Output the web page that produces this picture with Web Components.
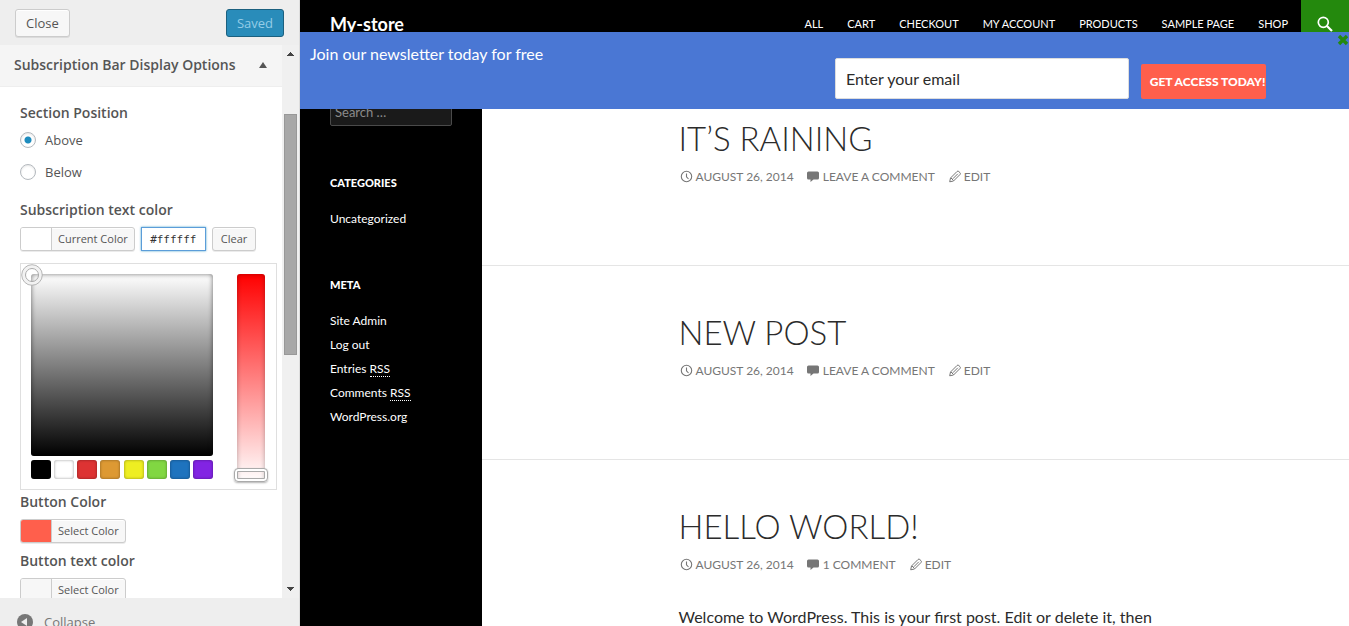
<!DOCTYPE html>
<html lang="en">
<head>
<meta charset="utf-8">
<title>Customize: My-store</title>
<style>
  body { margin: 0; font-family: "Open Sans", sans-serif; }
  side-widget a { color: #fff; text-decoration: none; }
  side-widget abbr { text-decoration: none; border-bottom: 1px dotted #fff; }
</style>
</head>
<body>
<customizer-app>
  <customizer-panel slot="panel">
    <panel-section heading="Subscription Bar Display Options">
      <position-control></position-control>
      <color-control heading="Subscription text color" color="#ffffff" open></color-control>
      <color-control heading="Button Color" color="#ff5f4c"></color-control>
      <color-control heading="Button text color" color="#f7f7f7"></color-control>
    </panel-section>
  </customizer-panel>
  <store-preview slot="preview">
    <store-header slot="header"></store-header>
    <newsletter-bar slot="bar"></newsletter-bar>
    <store-sidebar slot="sidebar">
      <side-widget heading="Categories">
        <li><a href="#uncategorized">Uncategorized</a></li>
      </side-widget>
      <side-widget heading="Meta">
        <li><a href="#admin">Site Admin</a></li>
        <li><a href="#logout">Log out</a></li>
        <li><a href="#entries">Entries <abbr title="Really Simple Syndication">RSS</abbr></a></li>
        <li><a href="#comments">Comments <abbr title="Really Simple Syndication">RSS</abbr></a></li>
        <li><a href="#wordpress">WordPress.org</a></li>
      </side-widget>
    </store-sidebar>
    <blog-post heading="It’s raining" comments="Leave a comment"></blog-post>
    <blog-post heading="New post" comments="Leave a comment"></blog-post>
    <blog-post heading="Hello world!" comments="1 Comment">Welcome to WordPress. This is your first post. Edit or delete it, then</blog-post>
  </store-preview>
</customizer-app>

<script>
const define = (name, render) => customElements.define(name, class extends HTMLElement {
  constructor() {
    super();
    this.attachShadow({ mode: "open" });
  }
  connectedCallback() {
    const t = document.createElement("template");
    t.innerHTML = render(this);
    this.shadowRoot.replaceChildren(t.content.cloneNode(true));
  }
});

/* Two-column shell: settings panel and live preview */
define("customizer-app", () => `
<style>
  :host { display: grid; grid-template-columns: 300px minmax(0, 1fr); height: 100vh; overflow: hidden; }
</style>
<slot name="panel"></slot>
<slot name="preview"></slot>`);

define("customizer-panel", () => `
<style>
  :host { display: flex; flex-direction: column; box-sizing: border-box; min-height: 0; height: 100vh;
          background: #eee; border-right: 1px solid #ddd; font-size: 13px; color: #555; }
  header { display: flex; justify-content: space-between; align-items: center; height: 45px; flex: none; padding: 0 15px; box-sizing: border-box; }
  button { font: inherit; line-height: 26px; padding: 0 10px; border: 1px solid #ccc; border-radius: 3px; background: #f7f7f7;
           color: #555; box-shadow: inset 0 1px 0 #fff, 0 1px 0 rgba(0,0,0,.08); }
  .saved { background: #298cba; border-color: #1b607f; color: #94cde7; box-shadow: none; }
  main { display: flex; flex: 1; min-height: 0; }
  .content { flex: 1; min-width: 0; overflow: hidden; background: #fff; }
  .bar { width: 17px; display: flex; flex-direction: column; background: #f0f0f0; }
  .bar svg { display: block; flex: none; }
  .rail { flex: 1; display: grid; grid-template-rows: 51fr 241fr 225fr; }
  .thumb { grid-row: 2; width: 13px; box-sizing: border-box; margin-left: 2px; background: #a8a8a8; border: 1px solid #989898; }
  footer { flex: none; height: 28px; overflow: hidden; }
  .collapse { display: flex; align-items: center; gap: 11px; height: 48px; padding: 0 17px; border: 0; background: none; box-shadow: none; color: #777; line-height: 24px; }
</style>
<header><button>Close</button><button class="saved">Saved</button></header>
<main>
  <div class="content"><slot></slot></div>
  <div class="bar" aria-hidden="true">
    <svg width="17" height="18"><path d="M5 11h7v-1h-1v-1h-1v-1H9V7H8v1H7v1H6v1H5z" fill="#444"/></svg>
    <div class="rail"><div class="thumb"></div></div>
    <svg width="17" height="18"><path d="M5 7h7v1h-1v1h-1v1H9v1H8v-1H7V9H6V8H5z" fill="#444"/></svg>
  </div>
</main>
<footer>
  <button class="collapse">
    <svg width="16" height="16" viewBox="0 0 16 16"><circle cx="8" cy="8" r="8" fill="#777"/><path d="M10 4v8L4 8z" fill="#eee"/></svg>
    Collapse
  </button>
</footer>`);

define("panel-section", el => `
<style>
  :host { display: block; }
  h3 { display: flex; align-items: center; justify-content: space-between; margin: 0; padding: 0 15px 2px 14px; height: 42px; box-sizing: border-box;
       background: #f5f5f5; border-bottom: 1px solid #eee; font-size: 14px; font-weight: 600; color: #555; }
  .body { padding: 14px 5px 14px 20px; }
</style>
<h3>${el.getAttribute("heading")}<svg width="8" height="6"><path d="M4 0l4 6H0z" fill="#555"/></svg></h3>
<div class="body"><slot></slot></div>`);

define("position-control", () => `
<style>
  :host { display: block; margin-bottom: 16px; }
  fieldset { margin: 0; padding: 0; border: 0; }
  legend { padding: 0; margin-bottom: 5px; font-size: 14px; font-weight: 600; line-height: 24px; }
  .choices { display: grid; gap: 12px; }
  .row { display: flex; align-items: center; gap: 9px; height: 20px; }
  input { appearance: none; width: 16px; height: 16px; box-sizing: border-box; margin: 0; border: 1px solid #b4b9be; border-radius: 50%; background: #fff; box-shadow: inset 0 1px 2px rgba(0,0,0,.1); }
  input:checked { background: radial-gradient(circle, #1e8cbe 0 2px, #1e8cbe 3px, #fff 4px); }
</style>
<fieldset>
  <legend>Section Position</legend>
  <div class="choices">
    <div class="row"><input type="radio" name="pos" id="above" checked><label for="above">Above</label></div>
    <div class="row"><input type="radio" name="pos" id="below"><label for="below">Below</label></div>
  </div>
</fieldset>`);

define("color-control", el => {
  const open = el.hasAttribute("open"), color = el.getAttribute("color");
  return `
<style>
  :host { display: block; margin-bottom: 6px; }
  :host([open]) { margin-bottom: 0; }
  label { display: block; margin-bottom: 5px; font-size: 14px; font-weight: 600; line-height: 24px; }
  .row { display: flex; gap: 6px; height: 24px; }
  button { box-sizing: border-box; font: inherit; font-size: 11px; line-height: 22px; color: #555; background: #f7f7f7; border: 1px solid #ccc; border-radius: 3px; box-shadow: inset 0 1px 0 #fff, 0 1px 0 rgba(0,0,0,.08); }
  .pick { display: flex; padding: 0; overflow: hidden; }
  .chip { width: 30px; height: 22px; background: ${color}; border-right: 1px solid #ccc; }
  .name { padding: 0 6px; }
  .clear { padding: 0 8px; }
  input { box-sizing: border-box; width: 65px; margin: 0; padding: 0; text-align: center; font: 11px "DejaVu Sans Mono", monospace; color: #333; border: 1px solid #5b9dd9; box-shadow: 0 0 2px rgba(30,140,190,.8); outline: 0; }
  color-picker { margin-top: 12px; }
</style>
<label for="value">${el.getAttribute("heading")}</label>
<div class="row">
  <button class="pick" ${open ? "" : 'id="value"'}><span class="chip"></span><span class="name">${open ? "Current Color" : "Select Color"}</span></button>
  ${open ? `<input id="value" type="text" value="${color}"><button class="clear">Clear</button>` : ""}
</div>
${open ? "<color-picker></color-picker>" : ""}`;
});

define("color-picker", () => `
<style>
  :host { display: flex; justify-content: space-between; box-sizing: border-box; width: 257px; height: 227px; padding: 10px 8px 6px 10px; border: 1px solid #dfdfdf; }
  .left { width: 182px; }
  .field { position: relative; height: 182px; border-radius: 3px; background: linear-gradient(#fff, #000); box-shadow: inset 0 0 5px rgba(0,0,0,.55); }
  .field svg { position: absolute; left: -10px; top: -10px; }
  .palette { display: flex; justify-content: space-between; margin-top: 4px; }
  .palette button { width: 20px; height: 19px; padding: 0; border: 0; border-radius: 3px; box-shadow: inset 0 0 3px rgba(0,0,0,.4); }
  input { appearance: none; writing-mode: vertical-lr; width: 34px; height: 208px; margin: 0; background: none; }
  input::-webkit-slider-runnable-track { width: 28px; height: 208px; margin: 0 3px; border-radius: 3px; background: linear-gradient(#f00, #fff); box-shadow: inset 0 0 5px rgba(0,0,0,.3); }
  input::-webkit-slider-thumb { appearance: none; box-sizing: border-box; width: 34px; height: 14px; margin-left: -3px; border: 1px solid #aaa; border-radius: 4px;
    background: none; box-shadow: inset 0 0 0 2px #fff, inset 0 0 0 3px #aaa, 0 1px 2px rgba(0,0,0,.3); }
</style>
<div class="left">
  <div class="field"><svg width="22" height="22" viewBox="0 0 22 22" fill="none">
    <circle cx="11" cy="11" r="8.5" stroke="#f2f2f2" stroke-width="3"/>
    <circle cx="11" cy="11" r="10.3" stroke="#b5b5b5"/><circle cx="11" cy="11" r="6.5" stroke="#aaa"/></svg></div>
  <div class="palette">${["#000", "#fff", "#dd3333", "#dd9933", "#eeee22", "#81d742", "#1e73be", "#8224e3"]
    .map(c => `<button style="background:${c}" aria-label="${c}"></button>`).join("")}</div>
</div>
<input type="range" min="0" max="100" value="100" aria-label="Saturation">`);

/* Live preview of the shop */
define("store-preview", () => `
<style>
  :host { display: flex; flex-direction: column; position: relative; min-width: 0; height: 100vh; overflow: hidden; background: #fff; font-family: Lato, sans-serif; color: #2b2b2b; }
  .page { display: grid; grid-template-columns: 182px minmax(0, 1fr); flex: 1; min-height: 0; }
  .posts { padding-top: 24px; }
  .overlay { position: absolute; left: 0; right: 0; top: 32px; }
</style>
<slot name="header"></slot>
<div class="page"><slot name="sidebar"></slot><div class="posts"><slot></slot></div></div>
<div class="overlay"><slot name="bar"></slot></div>`);

define("store-header", () => `
<style>
  :host { display: flex; flex: none; align-items: center; height: 48px; background: #000; }
  h1 { flex: 1; margin: 0 30px; font-size: 18px; line-height: 48px; font-weight: 700; }
  a { color: #fff; text-decoration: none; }
  nav { display: flex; font-size: 11px; line-height: 48px; text-transform: uppercase; margin-right: 1px; }
  nav a { padding: 0 12px; }
  button { width: 48px; height: 48px; padding: 0; border: 0; background: #24890d; }
  svg { display: block; margin: auto; }
</style>
<h1><a href="#home">My-store</a></h1>
<nav>${["All", "Cart", "Checkout", "My account", "Products", "Sample Page", "Shop"].map(t => `<a href="#${t.toLowerCase().replace(" ", "-")}">${t}</a>`).join("")}</nav>
<button aria-label="Search"><svg width="16" height="16" viewBox="0 0 16 16" fill="none" stroke="#fff"><circle cx="6.3" cy="6.3" r="5" stroke-width="1.7"/><path d="M10 10l5 5" stroke-width="2.2"/></svg></button>`);

define("newsletter-bar", () => `
<style>
  :host { display: grid; grid-template-columns: 51% 28% 1fr; align-items: start; height: 77px; background: #4a77d4; }
  p { margin: 10px 10px 0; font-size: 16px; line-height: 24px; color: #fff; }
  form { display: contents; }
  input { box-sizing: border-box; width: 100%; height: 41px; margin: 26px 0 0; padding: 0 10px; border: 1px solid #ddd; border-radius: 2px; background: #fff; font: 16px Lato, sans-serif; color: #2b2b2b; }
  .go { width: 125px; height: 35px; margin: 32px 0 0 12px; padding: 0 0 0 9px; border: 0; border-radius: 2px; overflow: hidden; background: #ff5f4c; color: #fff;
        font: 900 12px Lato, sans-serif; text-transform: uppercase; white-space: nowrap; text-align: left; }
  .x { position: absolute; right: 0; top: 2px; padding: 0; border: 0; background: none; }
  .x svg { display: block; }
</style>
<p>Join our newsletter today for free</p>
<form>
  <input type="text" value="Enter your email" aria-label="Email">
  <button class="go" type="button">Get access today!</button>
</form>
<button class="x" aria-label="Dismiss"><svg width="12" height="12" viewBox="0 0 12 12"><path d="M2 2l8 8M10 2l-8 8" stroke="#24890d" stroke-width="3.4"/></svg></button>`);

define("store-sidebar", () => `
<style>
  :host { display: block; box-sizing: border-box; padding: 52px 30px 0; background: #000; color: #fff; }
  input { display: block; box-sizing: border-box; width: 100%; height: 26px; margin: 0 0 45px; padding: 0 4px 2px; border: 1px solid #4a4a4a; border-radius: 2px; background: #1a1a1a; font: 13px Lato, sans-serif; color: #fff; }
  input::placeholder { color: #8a8a8a; }
</style>
<input type="search" placeholder="Search …" aria-label="Search">
<slot></slot>`);

define("side-widget", el => `
<style>
  :host { display: block; margin-bottom: 42px; font-size: 12px; line-height: 24px; }
  h2 { margin: 0 0 12px; font-size: 11px; line-height: 24px; font-weight: 900; text-transform: uppercase; }
  ul { margin: 0; padding: 0; list-style: none; }
  ::slotted(li) { list-style: none; }
</style>
<h2>${el.getAttribute("heading")}</h2>
<ul><slot></slot></ul>`);

const icons = {
  clock: `<circle cx="7.5" cy="7.5" r="5.2" fill="none" stroke="#767676" stroke-width="1.1"/><path d="M7.5 4.5v3.300l2 2.200" fill="none" stroke="#767676" stroke-width="1.1"/>`,
  comment: `<path d="M2.500 2.500h9a1.500 1.500 0 0 1 1.500 1.500v5a1.500 1.500 0 0 1-1.500 1.500H7.500L4.500 13v-2.500h-2A1.500 1.500 0 0 1 1 9V4A1.500 1.500 0 0 1 2.500 2.500z" fill="#767676"/>`,
  pencil: `<path d="M2.700 12.800l.8-3.800 6.500-6.500a1.300 1.300 0 0 1 1.800 0l1.200 1.200a1.300 1.300 0 0 1 0 1.800l-6.500 6.500zM4 9l2.500 2.500M5.800 9.800l5-5" fill="none" stroke="#767676"/>`
};

define("meta-icon", el => `
<style>:host { display: block; width: 16px; height: 16px; } svg { display: block; }</style>
<svg width="16" height="16" viewBox="0 0 16 16">${icons[el.getAttribute("kind")]}</svg>`);

define("blog-post", el => `
<style>
  :host { display: block; box-sizing: border-box; min-height: 194px; padding-top: 48px; border-bottom: 1px solid #e5e5e5; }
  article { max-width: 474px; margin: 0 auto; }
  h1 { margin: 0 0 9px; font-size: 33px; line-height: 36px; font-weight: 300; text-transform: uppercase; }
  a { color: inherit; text-decoration: none; }
  .meta { display: flex; gap: 12px; font-size: 12px; line-height: 24px; color: #767676; text-transform: uppercase; }
  .meta span { display: flex; align-items: center; gap: 1px; }
  p { margin: 28px 0 0; font-size: 16px; line-height: 24px; }
</style>
<article>
  <h1><a href="#post">${el.getAttribute("heading")}</a></h1>
  <div class="meta">
    <span><meta-icon kind="clock"></meta-icon><a href="#date">August 26, 2014</a></span>
    <span><meta-icon kind="comment"></meta-icon><a href="#comments">${el.getAttribute("comments")}</a></span>
    <span><meta-icon kind="pencil"></meta-icon><a href="#edit">Edit</a></span>
  </div>
  ${el.textContent.trim() ? "<p><slot></slot></p>" : ""}
</article>`);
</script>
</body>
</html>
